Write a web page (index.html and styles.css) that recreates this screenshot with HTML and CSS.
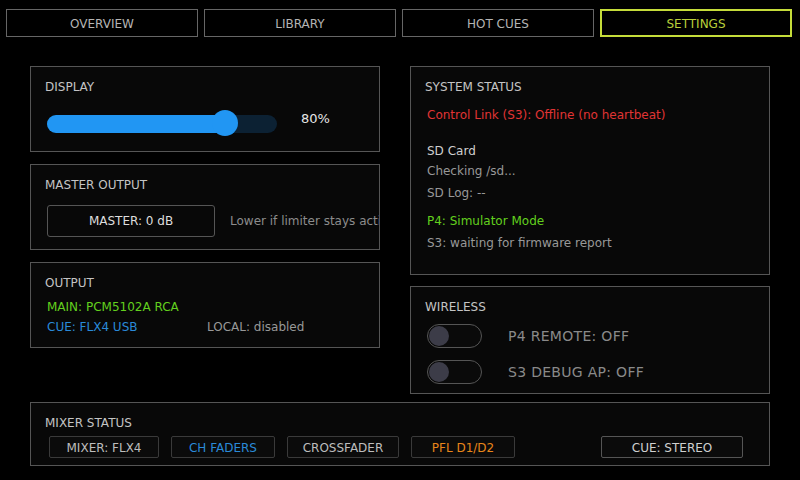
FILE: index.html
```html
<!DOCTYPE html>
<html>
<head>
<meta charset="utf-8">
<link rel="stylesheet" href="styles.css">
</head>
<body>
<div class="app">
  <nav class="tabs">
    <div class="tab">OVERVIEW</div>
    <div class="tab">LIBRARY</div>
    <div class="tab">HOT CUES</div>
    <div class="tab active">SETTINGS</div>
  </nav>
  <main class="content">
    <div class="col col-left">
      <section class="panel panel-sm">
        <h2 class="title">DISPLAY</h2>
        <div class="slider-row">
          <div class="slider">
            <div class="slider-fill" style="width: 77.4%"></div>
            <div class="slider-knob" style="left: 77.4%"></div>
          </div>
          <span class="slider-val">80%</span>
        </div>
      </section>
      <section class="panel panel-sm">
        <h2 class="title">MASTER OUTPUT</h2>
        <div class="master-row">
          <div class="btn">MASTER: 0 dB</div>
          <span class="hint">Lower if limiter stays active</span>
        </div>
      </section>
      <section class="panel panel-sm">
        <h2 class="title">OUTPUT</h2>
        <div class="line green out-main">MAIN: PCM5102A RCA</div>
        <div class="out-row">
          <span class="blue out-cue">CUE: FLX4 USB</span>
          <span class="dim">LOCAL: disabled</span>
        </div>
      </section>
    </div>
    <div class="col col-right">
      <section class="panel panel-sys">
        <h2 class="title">SYSTEM STATUS</h2>
        <div class="line red s-link">Control Link (S3): Offline (no heartbeat)</div>
        <div class="line light s-sd">SD Card</div>
        <div class="line dim s-check">Checking /sd...</div>
        <div class="line dim s-log">SD Log: --</div>
        <div class="line green s-p4">P4: Simulator Mode</div>
        <div class="line dim s-s3">S3: waiting for firmware report</div>
      </section>
      <section class="panel panel-wl">
        <h2 class="title">WIRELESS</h2>
        <div class="wl-row wl-first">
          <div class="toggle"><div class="toggle-knob"></div></div>
          <span class="wl-label">P4 REMOTE: OFF</span>
        </div>
        <div class="wl-row">
          <div class="toggle"><div class="toggle-knob"></div></div>
          <span class="wl-label">S3 DEBUG AP: OFF</span>
        </div>
      </section>
    </div>
    <section class="panel panel-mixer">
      <h2 class="title">MIXER STATUS</h2>
      <div class="chips">
        <div class="chip w110">MIXER: FLX4</div>
        <div class="chip w104 blue">CH FADERS</div>
        <div class="chip w112">CROSSFADER</div>
        <div class="chip w104 orange">PFL D1/D2</div>
        <div class="chip w142 chip-cue">CUE: STEREO</div>
      </div>
    </section>
  </main>
</div>
</body>
</html>
```
FILE: styles.css
```css
* { box-sizing: border-box; }
html, body {
  margin: 0;
  padding: 0;
  background: #000;
}
body {
  width: 800px;
  height: 480px;
  overflow: hidden;
  font-family: "DejaVu Sans", "Liberation Sans", sans-serif;
  font-size: 12px;
  color: #bbb;
}
.app {
  display: flex;
  flex-direction: column;
}
.tabs {
  display: flex;
  gap: 6px;
  padding: 9px 8px 0 6px;
}
.tab {
  width: 192px;
  height: 28px;
  padding-top: 2px;
  border: 1px solid #666;
  display: flex;
  align-items: center;
  justify-content: center;
  font-size: 12px;
  color: #b4b4b4;
}
.tab.active {
  border: 2px solid #c5dc3a;
  color: #b9cf3a;
}
.content {
  display: grid;
  grid-template-columns: 350px 360px;
  column-gap: 30px;
  padding: 29px 30px 0 30px;
}
.col {
  display: flex;
  flex-direction: column;
}
.col-left { gap: 12px; }
.col-right { gap: 11px; }
.panel {
  background: #080808;
  border: 1px solid #555;
  padding: 12px 14px 0 16px;
  overflow: hidden;
  white-space: nowrap;
}
.panel-sm { height: 86px; }
.panel-sys { height: 209px; }
.panel-wl { height: 108px; }
.panel-mixer {
  grid-column: 1 / span 2;
  margin-top: 8px;
  height: 64px;
  padding-left: 16px;
}
.title {
  margin: 0 0 0 -2px;
  font-weight: normal;
  font-size: 12px;
  line-height: 16px;
  color: #c4c4c4;
}
.line {
  font-size: 12px;
  line-height: 16px;
}
.green { color: #62d01e; }
.blue { color: #2a8ad8; }
.red { color: #e03434; }
.orange { color: #e8861a; }
.dim { color: #989898; }
.light { color: #cfcfcf; }

/* display */
.slider-row {
  display: flex;
  align-items: flex-start;
  margin-top: 15px;
}
.slider {
  position: relative;
  flex-shrink: 0;
  width: 230px;
  height: 18px;
  margin-top: 5px;
  border-radius: 9px;
  background: #0c2133;
}
.slider-fill {
  height: 18px;
  border-radius: 9px;
  background: #2196f3;
}
.slider-knob {
  position: absolute;
  top: -5px;
  width: 26px;
  height: 26px;
  margin-left: -13px;
  border-radius: 50%;
  background: #2196f3;
}
.slider-val {
  margin-left: 24px;
  line-height: 16px;
  margin-top: 1px;
  font-size: 13px;
  color: #e6e6e6;
}

/* master */
.master-row {
  display: flex;
  align-items: center;
  gap: 15px;
  margin-top: 12px;
}
.btn {
  flex-shrink: 0;
  width: 168px;
  height: 32px;
  border: 1px solid #555;
  border-radius: 3px;
  display: flex;
  align-items: center;
  justify-content: center;
  color: #dedede;
  font-size: 12px;
}
.hint {
  flex-shrink: 0;
  color: #8c8c8c;
  font-size: 12px;
}

/* output */
.out-main { margin-top: 8px; }
.out-row {
  display: flex;
  margin-top: 4px;
  line-height: 16px;
}
.out-cue { width: 160px; }

/* system */
.s-link { margin-top: 12px; }
.s-sd { margin-top: 20px; }
.s-check { margin-top: 4px; }
.s-log { margin-top: 6px; }
.s-p4 { margin-top: 12px; }
.s-s3 { margin-top: 6px; }

/* wireless */
.wl-row {
  display: flex;
  align-items: center;
  gap: 26px;
  height: 24px;
  margin-top: 12px;
}
.wl-first { margin-top: 9px; }
.toggle {
  flex-shrink: 0;
  width: 55px;
  height: 24px;
  border: 1px solid #555;
  border-radius: 12px;
  background: #0a0a0a;
  padding: 1px;
  display: flex;
  align-items: center;
}
.toggle-knob {
  width: 20px;
  height: 20px;
  border-radius: 50%;
  background: #3c3c48;
}
.wl-label {
  font-size: 14px;
  color: #8a8a8a;
  letter-spacing: 0.3px;
}

/* mixer */
.chips {
  display: flex;
  gap: 12px;
  margin-top: 5px;
  margin-left: 2px;
}
.chip {
  flex-shrink: 0;
  height: 22px;
  padding-top: 1px;
  border: 1px solid #3a3a3a;
  border-radius: 2px;
  background: #0b0b0b;
  display: flex;
  align-items: center;
  justify-content: center;
  font-size: 12px;
  color: #bdbdbd;
}
.chip.blue { color: #2a8ad8; }
.chip.orange { color: #e8861a; }
.w110 { width: 110px; }
.w104 { width: 104px; }
.w112 { width: 112px; }
.w142 { width: 142px; }
.chip-cue {
  margin-left: 74px;
  border-color: #555;
  color: #d0d0d0;
}
```
